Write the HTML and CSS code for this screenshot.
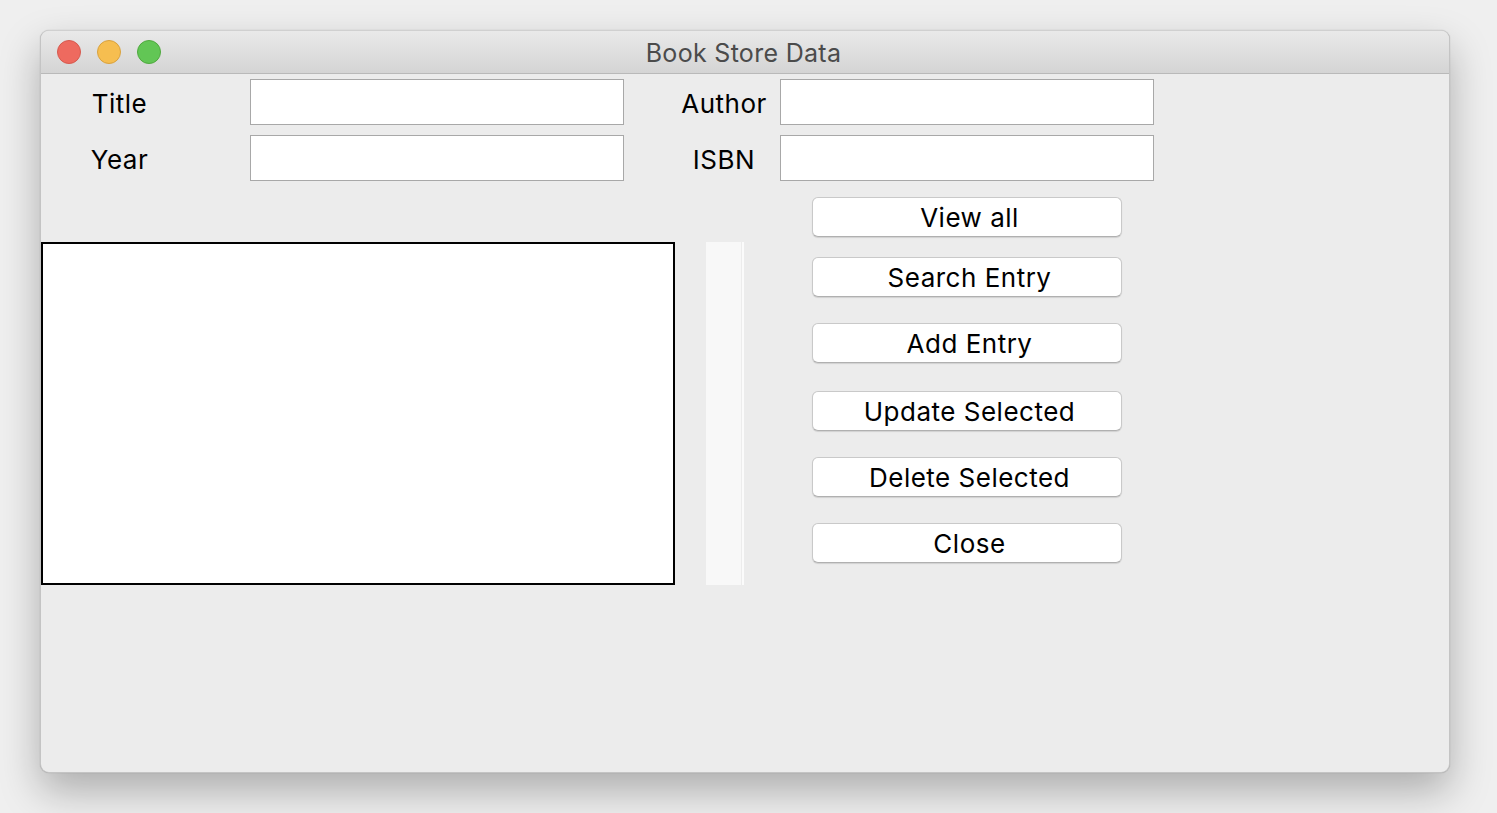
FILE: index.html
```html
<!DOCTYPE html>
<html>
<head>
<meta charset="utf-8">
<title>Book Store Data</title>
<link rel="stylesheet" href="styles.css">
</head>
<body>
<div class="window">
  <div class="titlebar">
    <div class="lights">
      <span class="light red"></span>
      <span class="light yellow"></span>
      <span class="light green"></span>
    </div>
    <div class="title">Book Store Data</div>
    <div></div>
  </div>
  <div class="content">
    <div class="form">
      <div class="label left">Title</div>
      <div class="entry"></div>
      <div class="label right">Author</div>
      <div class="entry"></div>
      <div class="label left">Year</div>
      <div class="entry"></div>
      <div class="label right">ISBN</div>
      <div class="entry"></div>
    </div>
    <div class="lower">
      <div class="listbox"></div>
      <div class="scrollbar"><div class="track"></div><div class="edge"></div></div>
      <div class="buttons">
        <div class="btn">View all</div>
        <div class="btn g20">Search Entry</div>
        <div class="btn g26">Add Entry</div>
        <div class="btn g28">Update Selected</div>
        <div class="btn g26">Delete Selected</div>
        <div class="btn g26">Close</div>
      </div>
    </div>
  </div>
</div>
</body>
</html>
```
FILE: styles.css
```css
html, body {
  margin: 0;
  padding: 0;
}
body {
  background: #efefef;
  width: 1497px;
  height: 813px;
  overflow: hidden;
  font-family: "Inter", "Noto Sans", sans-serif;
  padding-top: 30px;
  box-sizing: border-box;
}
.window {
  margin-left: 40px;
  width: 1410px;
  height: 743px;
  box-sizing: border-box;
  background: #ececec;
  border: 1px solid #c4c4c4;
  border-top-color: #d0d0d0;
  border-radius: 9px;
  box-shadow: 0 18px 40px rgba(0,0,0,0.28), 0 0 1px rgba(0,0,0,0.3);
  overflow: hidden;
}
.titlebar {
  height: 42px;
  border-bottom: 1px solid #b9b9b9;
  background: linear-gradient(#e9e9e9, #d4d4d4);
  display: grid;
  grid-template-columns: 1fr auto 1fr;
  align-items: center;
}
.lights {
  display: flex;
  gap: 16px;
  padding-left: 16px;
}
.light {
  width: 24px;
  height: 24px;
  border-radius: 50%;
  box-sizing: border-box;
}
.red { background: #ee6a5f; border: 1px solid #d65a4f; }
.yellow { background: #f6be50; border: 1px solid #d9a23f; }
.green { background: #62c655; border: 1px solid #50a93f; }
.title {
  font-size: 25px;
  letter-spacing: 0.3px;
  color: #4b4b4b;
  padding-top: 1px;
  padding-right: 3px;
}
.content {
  padding-top: 5px;
}
.form {
  display: grid;
  grid-template-columns: 209px 374px 156px 374px;
  grid-auto-rows: 46px;
  row-gap: 10px;
  align-items: center;
}
.label {
  font-size: 26px;
  letter-spacing: 0.5px;
  color: #000;
  text-align: center;
  padding-top: 2px;
}
.label.left { width: 157px; }
.label.right { width: 112px; justify-self: end; }
.entry {
  height: 46px;
  box-sizing: border-box;
  background: #fff;
  border: 1px solid #a8a8a8;
}
.lower {
  display: flex;
  align-items: flex-start;
  margin-top: 16px;
}
.listbox {
  margin-top: 45px;
  width: 634px;
  height: 343px;
  box-sizing: border-box;
  border: 2px solid #000;
  background: #fff;
}
.scrollbar {
  margin-top: 45px;
  margin-left: 31px;
  width: 38px;
  height: 343px;
  display: flex;
}
.track {
  width: 35px;
  background: #f8f8f8;
}
.edge {
  width: 2px;
  margin-left: 1px;
  background: #fbfbfb;
}
.buttons {
  margin-left: 68px;
  width: 310px;
  display: flex;
  flex-direction: column;
}
.btn {
  height: 40px;
  box-sizing: border-box;
  background: #fff;
  border: 1px solid #c9c9c9;
  border-bottom-color: #b0b0b0;
  border-radius: 6px;
  box-shadow: 0 1px 1px rgba(0,0,0,0.12);
  font-size: 26px;
  letter-spacing: 0.5px;
  color: #000;
  text-align: center;
  line-height: 39px;
  padding-left: 5px;
}
.g20 { margin-top: 20px; }
.g26 { margin-top: 26px; }
.g28 { margin-top: 28px; }
```
